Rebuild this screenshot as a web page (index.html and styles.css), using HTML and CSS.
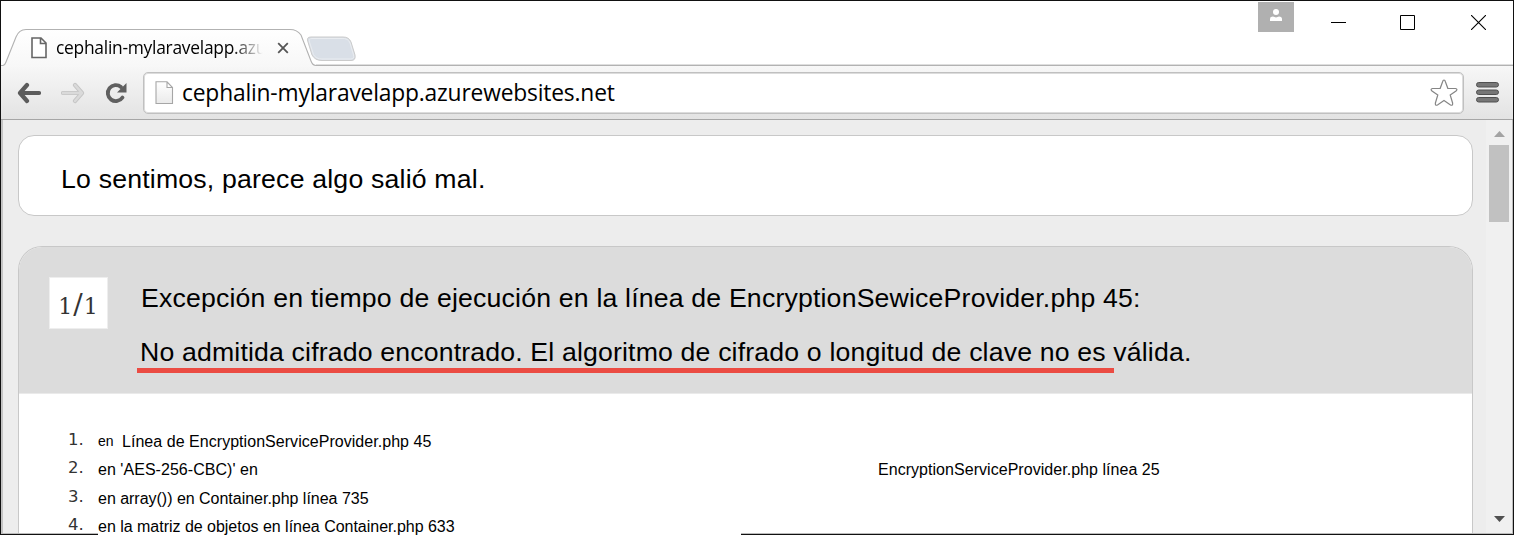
FILE: index.html
```html
<!DOCTYPE html>
<html lang="es">
<head>
<meta charset="utf-8">
<title>cephalin-mylaravelapp.azurewebsites.net</title>
<link rel="stylesheet" href="styles.css">
</head>
<body>
<div class="window">
  <header class="titlebar">
    <svg class="tab-shape" width="1512" height="66" viewBox="1 1 1512 66">
      <defs>
        <linearGradient id="tabfill" x1="0" y1="0" x2="0" y2="1"><stop offset="0" stop-color="#fff"/><stop offset="1" stop-color="#f7f7f7"/></linearGradient>
      </defs>
      <path d="M311 37H343Q349 37 351 42L355 55Q356 60.500 351 60.500H322Q315 60.500 312 55L308 42Q306 37 311 37Z" fill="#d9dfe7" stroke="#cbcbcb"/>
      <path d="M312 38.500H342Q348 38 350 43L353.500 55Q354.500 59 350.500 59H322Q316 59 313.500 54.500L309.500 42Q308.500 38.500 312 38.500Z" fill="none" stroke="#e9ecf0"/>
      <path d="M1 65.500H3Q5 65 6 62L16 37Q19 29.500 26 29.500H290Q297 29.500 301 35L311 61Q312.500 65.500 316 65.500H1514V68H1Z" fill="url(#tabfill)"/>
      <path d="M316 64.500H1514" stroke="#dedede" fill="none"/>
      <path d="M1 65.500H3Q5 65 6 62L16 37Q19 29.500 26 29.500H290Q297 29.500 301 35L311 61Q312.500 65.500 316 65.500H1514" fill="none" stroke="#b2b2b2" stroke-width="1.100"/>
    </svg>
    <div class="tab">
      <svg class="tab-page" width="16" height="22" viewBox="0 0 16 22"><path d="M1 1H10L15 6V20.500H1ZM9.500 1V6.500H15" fill="#fff" stroke="#666" stroke-width="1.600"/></svg>
      <span class="tab-title">cephalin-mylaravelapp.azu</span>
      <svg class="tab-close" width="12" height="12" viewBox="0 0 12 12"><path d="M1.200 1.200L10.800 10.800M10.800 1.200L1.200 10.800" stroke="#555" stroke-width="1.800"/></svg>
    </div>
    <div class="controls">
      <div class="user"><svg width="12" height="12" viewBox="0 0 12 12"><circle cx="6" cy="3" r="3" fill="#fff"/><path d="M0 12V10Q0 7.500 3 7.500L6 8.500L9 7.500Q12 7.500 12 10V12Z" fill="#fff"/></svg></div>
      <svg class="minimize" width="15" height="15" viewBox="0 0 15 15"><path d="M0 7.500H15" stroke="#000"/></svg>
      <svg class="maximize" width="15" height="15" viewBox="0 0 15 15"><path d="M.5 .5H14.500V14.500H.5Z" fill="none" stroke="#000"/></svg>
      <svg class="close" width="15" height="15" viewBox="0 0 15 15"><path d="M0 0L15 15M15 0L0 15" stroke="#000" stroke-width="1.100"/></svg>
    </div>
  </header>
  <nav class="toolbar">
    <svg class="back" width="24" height="22" viewBox="0 0 24 22"><path d="M10 3L3 11L10 19M3.500 11H22" fill="none" stroke="#5c5c5c" stroke-width="4.200" stroke-linecap="round" stroke-linejoin="round"/></svg>
    <svg class="forward" width="24" height="22" viewBox="0 0 24 22"><path d="M14 3L21 11L14 19M20.500 11H2" fill="none" stroke="#c5c5c5" stroke-width="4.200" stroke-linecap="round" stroke-linejoin="round"/><path d="M14 3L21 11L14 19M20.500 11H2" fill="none" stroke="#dadada" stroke-width="2.500" stroke-linecap="round" stroke-linejoin="round"/></svg>
    <svg class="reload" width="22" height="22" viewBox="0 0 22 22"><path d="M17.500 15.500A8 8 0 1 1 16 5" fill="none" stroke="#606060" stroke-width="3.800" stroke-linecap="round"/><path d="M21.500 1V10.500H12Z" fill="#606060"/></svg>
    <div class="address">
      <svg width="19" height="24" viewBox="0 0 19 24"><defs><linearGradient id="pg" x1="0" y1="0" x2="0" y2="1"><stop offset="0" stop-color="#fff"/><stop offset="1" stop-color="#eaeaea"/></linearGradient></defs><path d="M1 .8H12L17.500 6.500V22.500H1ZM12 .8V6.500H17.500" fill="url(#pg)" stroke="#a6a6a6" stroke-width="1.100"/></svg>
      <span class="url">cephalin-mylaravelapp.azurewebsites.net</span>
      <svg class="star" width="28" height="27" viewBox="0 0 28 27"><path d="M14 1Q15 1 15.500 3L17.800 9.300L25.500 9.500Q28 10 26 12L20.200 16L22.600 24Q23 27 20.500 26L14 21.500L7.500 26Q5 27 5.400 24L7.800 16L2 12Q0 10 2.500 9.500L10.200 9.300L12.500 3Q13 1 14 1Z" fill="#fff" stroke="#858585" stroke-width="1.200"/></svg>
    </div>
    <svg class="menu" width="24" height="21" viewBox="0 0 24 21"><g fill="#777" stroke="#505050"><rect x=".5" y=".5" width="22" height="4.500" rx="2.200"/><rect x=".5" y="8" width="22" height="4.500" rx="2.200"/><rect x=".5" y="15.500" width="22" height="4.500" rx="2.200"/></g></svg>
  </nav>
  <div class="viewport">
    <main class="page">
      <section class="notice"><h1>Lo sentimos, parece algo salió mal.</h1></section>
      <section class="exception">
        <div class="summary">
          <span class="count">1<span class="slash">/</span>1</span>
          <div class="message">
            <p class="source">Excepción en tiempo de ejecución en la línea de EncryptionSewiceProvider.php 45:</p>
            <p class="reason">No admitida cifrado encontrado. El algoritmo de cifrado o longitud de clave no es válida.</p>
            <div class="underline"></div>
          </div>
        </div>
        <div class="trace">
          <div class="row"><span class="num">1.</span><span class="in">en</span><span class="text t1">Línea de EncryptionServiceProvider.php 45</span></div>
          <div class="row"><span class="num">2.</span><span class="text t2">en 'AES-256-CBC)' en</span><span class="text t1">EncryptionServiceProvider.php línea 25</span></div>
          <div class="row"><span class="num">3.</span><span class="text t3">en array()) en Container.php línea 735</span></div>
          <div class="row"><span class="num">4.</span><span class="text t3">en la matriz de objetos en línea Container.php 633</span></div>
        </div>
      </section>
    </main>
    <aside class="scrollbar">
      <svg width="11" height="6" viewBox="0 0 11 6"><path d="M0 6L5.500 0L11 6Z" fill="#a3a3a3"/></svg>
      <div class="thumb"></div>
      <svg class="down" width="11" height="6" viewBox="0 0 11 6"><path d="M0 0H11L5.500 6Z" fill="#505050"/></svg>
    </aside>
  </div>
</div>
<div class="edge-gap"></div>
</body>
</html>
```
FILE: styles.css
```css
* { box-sizing: border-box; }
body { margin: 0; overflow: hidden; background: #fff; font-family: "Liberation Sans", Arial, sans-serif; color: #000; }
svg { display: block; flex: none; }
h1, p { margin: 0; font-weight: 400; }
.window { width: 1514px; height: 535px; border: 1px solid #111; display: flex; flex-direction: column; background: #fff; }
.titlebar { position: relative; height: 65px; flex: none; display: flex; justify-content: space-between; }
.tab-shape { position: absolute; left: 0; top: 0; }
.tab { position: relative; display: flex; align-items: center; height: 36px; margin: 29px 0 0 30px; font: 17.4px "Open Sans", "Noto Sans", sans-serif; }
.tab-title { width: 209px; margin: 0 0 2px 9px; white-space: nowrap; letter-spacing: -.26px; -webkit-mask-image: linear-gradient(90deg, #000 84%, transparent 99%); mask-image: linear-gradient(90deg, #000 84%, transparent 99%); }
.tab-close { margin-left: 12px; }
.controls { position: relative; display: flex; align-items: flex-start; padding-right: 27px; }
.user { width: 36px; height: 30px; margin-top: 1px; background: #b0b0b0; padding: 7px 0 0 12px; }
.minimize { margin: 14px 0 0 37px; }
.maximize { margin: 14px 0 0 54px; }
.close { margin: 14px 0 0 56px; }
.toolbar { height: 54px; flex: none; display: flex; align-items: center; padding: 0 13px 0 16px; background: linear-gradient(#f7f7f7, #e3e3e3); border-bottom: 1px solid #a6a6a6; }
.forward { margin-left: 20px; }
.reload { margin-left: 20px; }
.address { flex: 1; height: 42px; margin: 0 12px 0 16px; padding: 0 5px 0 11px; display: flex; align-items: center; background: #fff; border: 1px solid #c0c0c0; box-shadow: inset 0 0 0 1px #dcdcdc; border-radius: 5px; }
.url { flex: 1; margin-left: 8px; font: 22.8px/36px "Open Sans", "Noto Sans", sans-serif; letter-spacing: -.18px; white-space: nowrap; }
.viewport { flex: 1; min-height: 0; display: flex; background: #ededed; border-left: 2px solid #c4c4c4; border-right: 1px solid #bbb; border-bottom: 1px solid #bbb; }
.page { flex: 1; min-width: 0; padding: 15px 13px 0 15px; }
.notice { height: 81px; padding: 27px 0 0 42px; background: #fff; border: 1px solid #c8c8c8; border-radius: 16px; }
h1, .message p { font-size: 26.67px; line-height: 32px; white-space: nowrap; letter-spacing: .19px; }
.message .source { letter-spacing: .177px; }
.exception { margin-top: 30px; height: 287px; background: #fff; border: 1px solid #c8c8c8; border-bottom: 0; border-radius: 24px 24px 0 0; }
.summary { display: flex; height: 147px; padding: 30px 0 0 30px; background: #dcdcdc; border-bottom: 1px solid #eaeaea; border-radius: 23px 23px 0 0; }
.count { width: 59px; height: 52px; flex: none; background: #fff; border: 1px solid #eee; color: #333; font: 22px/58px "DejaVu Serif", serif; letter-spacing: 1px; text-align: center; }
.slash { font-size: 28px; line-height: 20px; }
.message { margin-left: 33px; padding-top: 5px; }
.message .reason { margin-top: 22px; margin-left: -1px; letter-spacing: .16px; }
.underline { width: 977px; height: 5px; margin: 0 0 0 -4px; background: #eb4c43; }
.trace { height: 139px; padding: 33px 0 0 49px; }
.row { display: flex; height: 28.400px; line-height: 29px; font-size: 16px; white-space: nowrap; }
.num { width: 30px; flex: none; font: 16.5px/26px "DejaVu Sans", sans-serif; color: #333; }
.in { width: 24px; font-size: 14px; }
.t1 { letter-spacing: .04px; }
.t2 { width: 780px; letter-spacing: .04px; }
.t3 { position: relative; z-index: 2; letter-spacing: -.02px; }
.scrollbar { width: 26px; flex: none; display: flex; flex-direction: column; align-items: center; padding-top: 11px; background: #f0f0f0; }
.thumb { width: 20px; height: 77px; margin-top: 8px; background: #c1c1c1; }
.down { margin-top: auto; margin-bottom: 11px; }
.edge-gap { position: absolute; left: 98px; bottom: 0; width: 643px; height: 2px; background: #fff; z-index: 1; }
```
